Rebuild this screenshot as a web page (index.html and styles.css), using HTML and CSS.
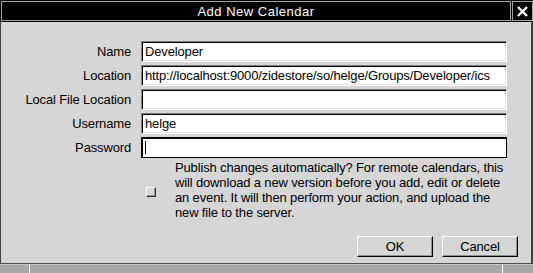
FILE: index.html
```html
<!DOCTYPE html>
<html>
<head>
<meta charset="utf-8">
<link rel="stylesheet" href="styles.css">
</head>
<body>
<div class="window">
  <div class="titlebar">
    <div class="title">Add New Calendar</div>
    <div class="close">
      <svg width="11" height="11" viewBox="0 0 11 11"><path d="M1 1 L10 10 M10 1 L1 10" stroke="#fff" stroke-width="2.4" fill="none"/></svg>
    </div>
  </div>
  <div class="content">
    <div class="form">
      <label class="lbl">Name</label>
      <div class="field">Developer</div>
      <label class="lbl">Location</label>
      <div class="field">http://localhost:9000/zidestore/so/helge/Groups/Developer/ics</div>
      <label class="lbl">Local File Location</label>
      <div class="field"></div>
      <label class="lbl">Username</label>
      <div class="field">helge</div>
      <label class="lbl">Password</label>
      <div class="field focus"><span class="caret"></span></div>
    </div>
    <div class="publish">
      <div class="check"></div>
      <p class="desc">Publish changes automatically? For remote calendars, this<br>will download a new version before you add, edit or delete<br>an event. It will then perform your action, and upload the<br>new file to the server.</p>
    </div>
    <div class="buttons">
      <div class="btn">OK</div>
      <div class="btn">Cancel</div>
    </div>
  </div>
  <div class="statusbar">
    <div class="cell first"></div>
    <div class="cell mid"></div>
    <div class="cell last"></div>
  </div>
</div>
</body>
</html>
```
FILE: styles.css
```css
html, body {
  margin: 0;
  padding: 0;
  background: #000;
}
body {
  font-family: "Liberation Sans", Arial, sans-serif;
  font-size: 13px;
  letter-spacing: -0.15px;
  color: #000;
}
.window {
  width: 533px;
  height: 273px;
  display: flex;
  flex-direction: column;
  overflow: hidden;
}
.titlebar {
  height: 22px;
  box-sizing: border-box;
  padding: 1px 0 1px 1px;
  display: flex;
  gap: 1px;
  background: #000;
}
.title {
  flex: 1;
  border: 1px solid #a0a0a0;
  color: #fff;
  font-size: 13px;
  letter-spacing: 0.5px;
  display: flex;
  align-items: center;
  justify-content: center;
}
.close {
  width: 21px;
  box-sizing: border-box;
  border: 1px solid #a0a0a0;
  display: flex;
  align-items: center;
  justify-content: center;
}
.content {
  flex: 1;
  background: #d6d6d6;
  border-left: 1px solid #404040;
  border-right: 2px solid #404040;
  padding-top: 19px;
  display: flex;
  flex-direction: column;
}
.form {
  display: grid;
  grid-template-columns: 130px 366px;
  grid-auto-rows: 21px;
  column-gap: 10px;
  row-gap: 3px;
}
.lbl {
  text-align: right;
  align-self: center;
  line-height: 15px;
}
.field {
  box-sizing: border-box;
  background: #fff;
  border-top: 1px solid #808080;
  border-left: 1px solid #808080;
  border-bottom: 1px solid #fff;
  border-right: 1px solid #fff;
  box-shadow: inset 1px 1px 0 #000, inset -1px -1px 0 #e4e4e4;
  padding: 0 4px 0 3px;
  line-height: 19px;
  white-space: nowrap;
  overflow: hidden;
}
.field.focus {
  border: 1px solid #000;
  box-shadow: inset 1px 1px 0 #000;
  display: flex;
  align-items: center;
}
.caret {
  width: 1px;
  height: 13px;
  background: #000;
}
.publish {
  display: flex;
  margin-top: 2px;
  padding-left: 145px;
}
.check {
  width: 10px;
  height: 10px;
  box-sizing: border-box;
  background: #d6d6d6;
  border-top: 1px solid #fff;
  border-left: 1px solid #fff;
  border-bottom: 1px solid #303030;
  border-right: 1px solid #303030;
  box-shadow: inset -1px -1px 0 #909090;
  margin-top: 27px;
  margin-right: 19px;
  flex: none;
}
.desc {
  margin: 0;
  line-height: 15px;
  white-space: nowrap;
}
.buttons {
  display: flex;
  justify-content: flex-end;
  gap: 9px;
  margin-top: 16px;
  padding-right: 13px;
}
.btn {
  width: 76px;
  height: 21px;
  box-sizing: border-box;
  border-top: 1px solid #fff;
  border-left: 1px solid #fff;
  border-bottom: 1px solid #000;
  border-right: 1px solid #000;
  box-shadow: inset -1px -1px 0 #909090;
  display: flex;
  align-items: center;
  justify-content: center;
}
.statusbar {
  height: 10px;
  box-sizing: border-box;
  border-top: 1px solid #505050;
  display: flex;
  gap: 1px;
  background-color: #fff;
}
.cell {
  background: #a8a8a8;
  box-shadow: inset 0 1px 0 #c4c4c4;
}
.cell.first { width: 29px; }
.cell.mid { flex: 1; }
.cell.last { width: 30px; }
```
